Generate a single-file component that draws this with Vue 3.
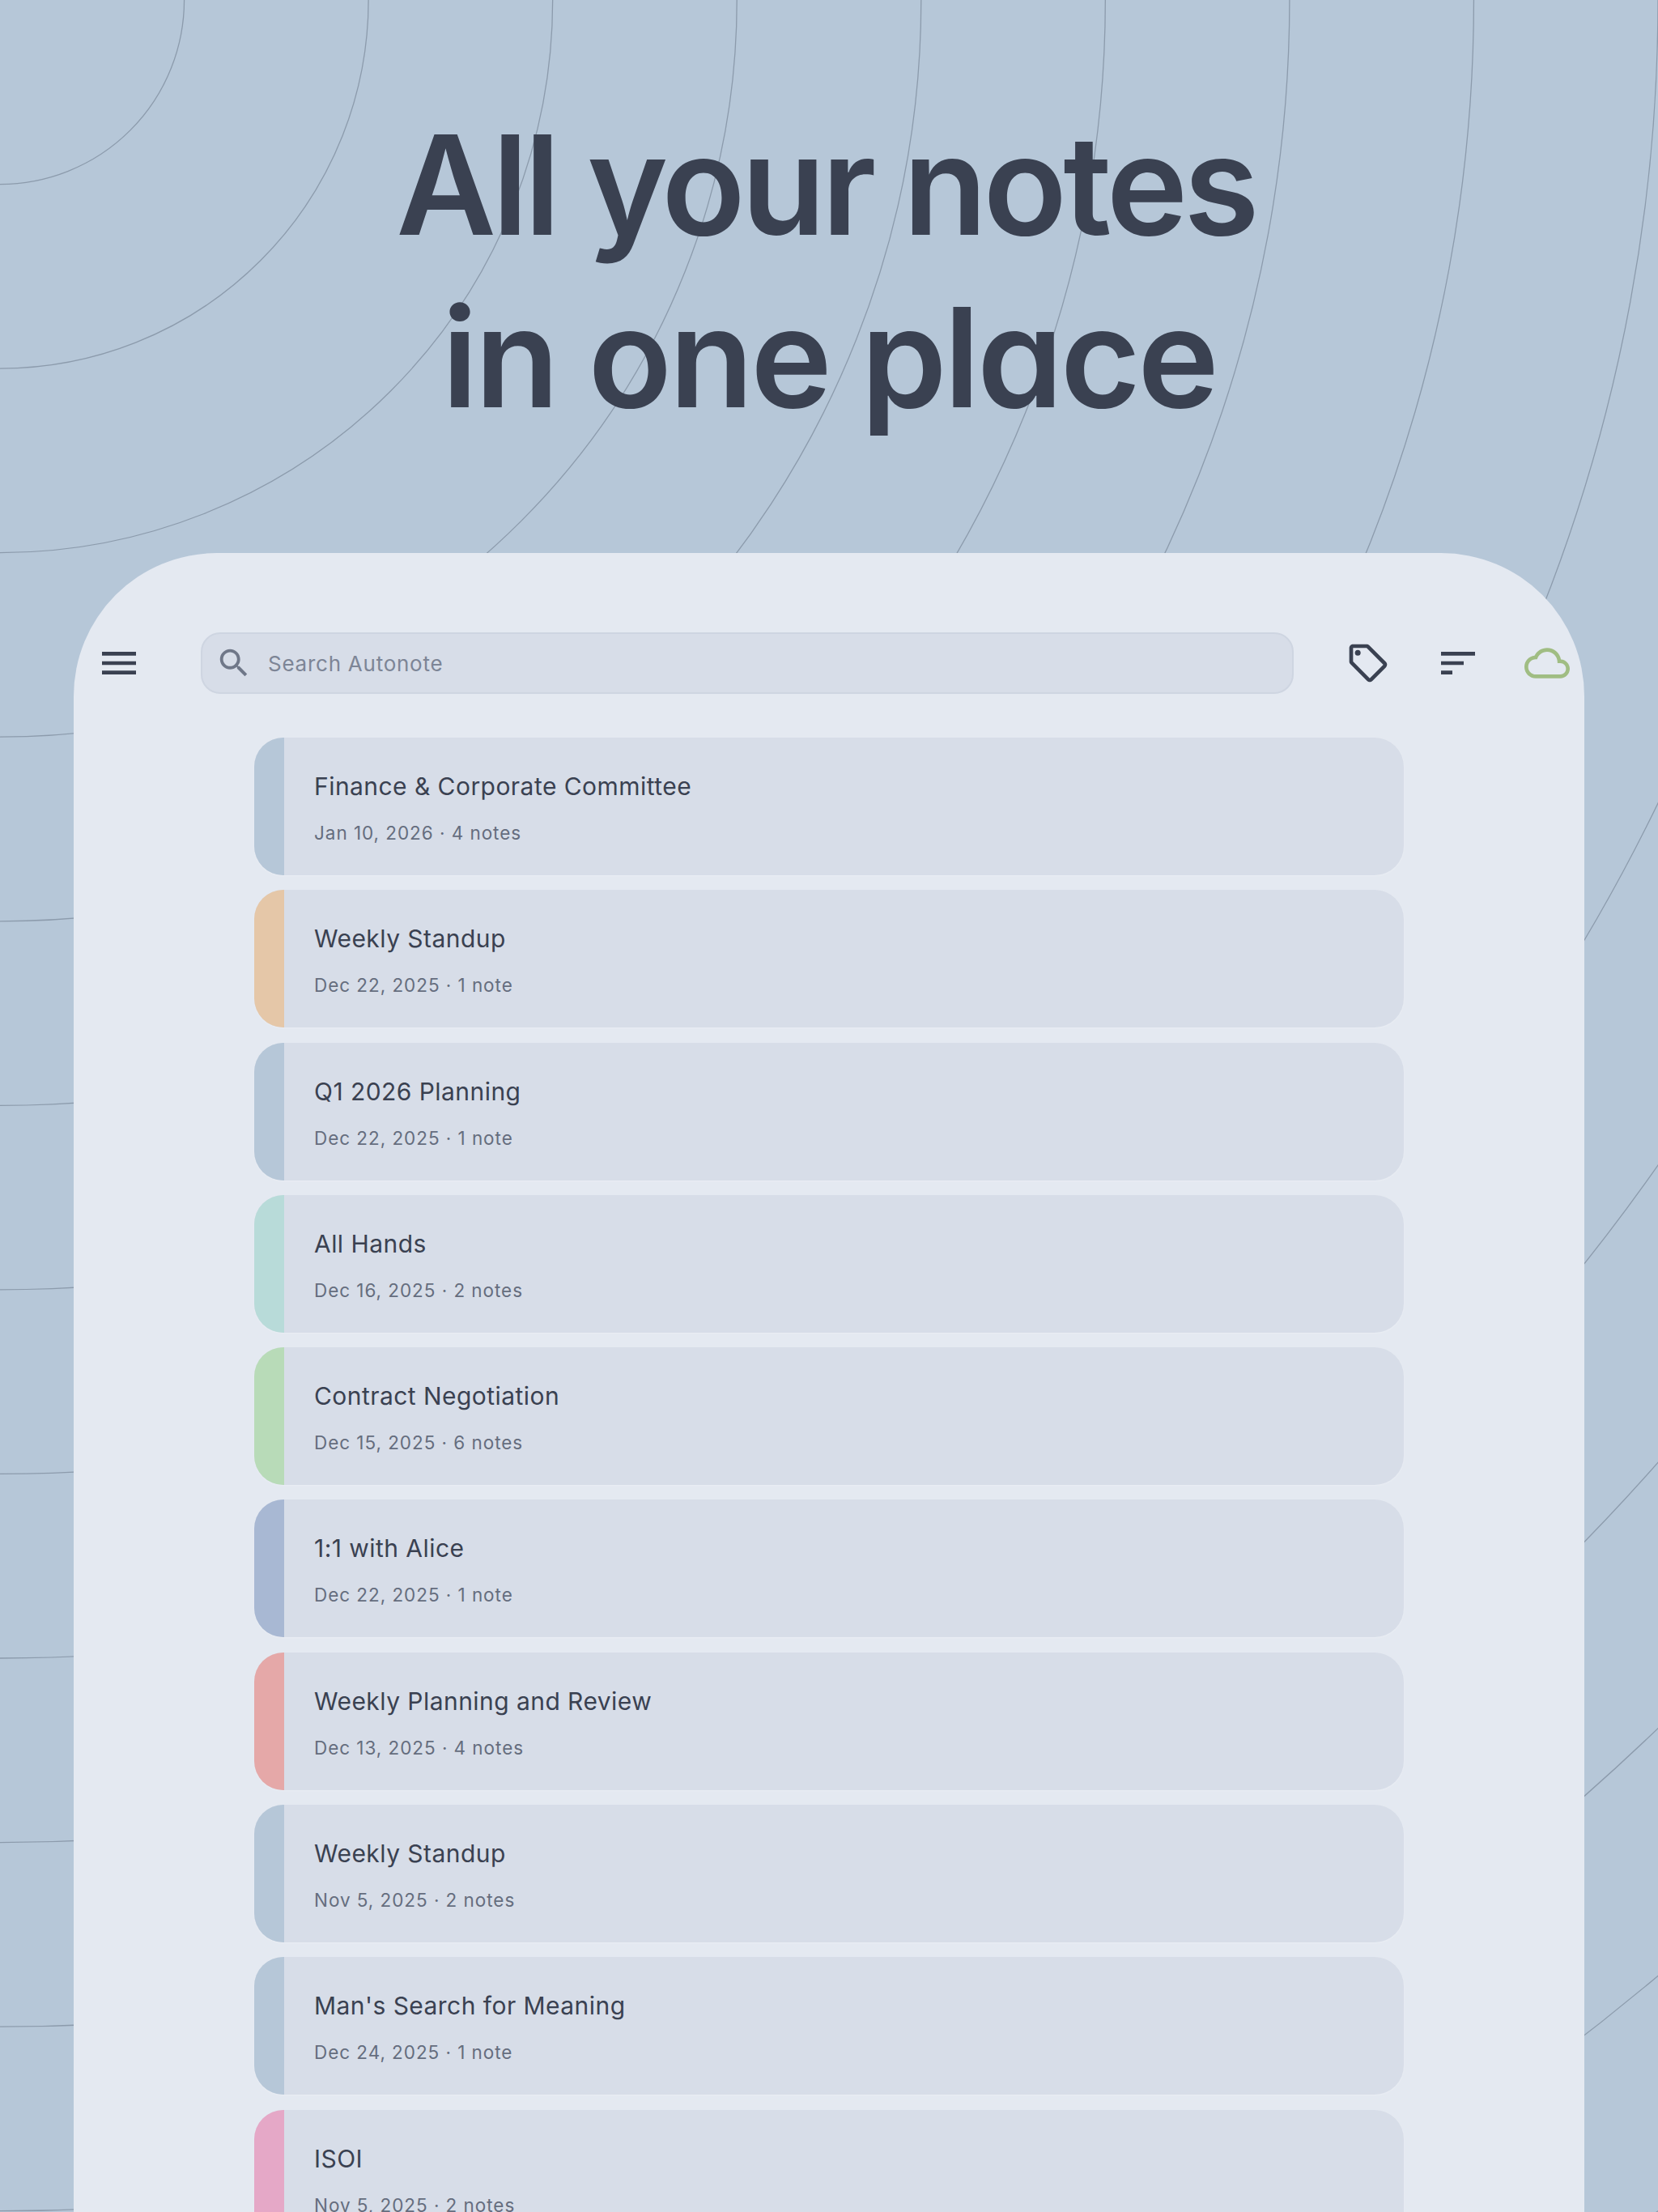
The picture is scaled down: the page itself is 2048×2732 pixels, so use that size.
<script setup>
const rings = Array.from({ length: 15 }, (_, i) => ((i + 1) * 2048) / 9)

const meetings = [
  { title: 'Finance & Corporate Committee', meta: 'Jan 10, 2026 · 4 notes', color: '#b6c7d8' },
  { title: 'Weekly Standup', meta: 'Dec 22, 2025 · 1 note', color: '#e5c7a8' },
  { title: 'Q1 2026 Planning', meta: 'Dec 22, 2025 · 1 note', color: '#b6c7d8' },
  { title: 'All Hands', meta: 'Dec 16, 2025 · 2 notes', color: '#b8dbd9' },
  { title: 'Contract Negotiation', meta: 'Dec 15, 2025 · 6 notes', color: '#b8dbb8' },
  { title: '1:1 with Alice', meta: 'Dec 22, 2025 · 1 note', color: '#a8b8d3' },
  { title: 'Weekly Planning and Review', meta: 'Dec 13, 2025 · 4 notes', color: '#e5a8a8' },
  { title: 'Weekly Standup', meta: 'Nov 5, 2025 · 2 notes', color: '#b6c7d8' },
  { title: "Man's Search for Meaning", meta: 'Dec 24, 2025 · 1 note', color: '#b6c7d8' },
  { title: 'ISOI', meta: 'Nov 5, 2025 · 2 notes', color: '#e5a8c7' }
]
</script>

<template>
  <div class="page">
    <!-- Background rings -->
    <svg class="rings" width="2048" height="2732" viewBox="0 0 2048 2732" fill="none">
      <circle v-for="r in rings" :key="r" cx="0" cy="0" :r="r" />
    </svg>

    <!-- Hero -->
    <h1 class="hero">
      <span class="line-one">All your notes</span>
      <span class="line-two">in one place</span>
    </h1>

    <!-- App card -->
    <div class="card">
      <div class="toolbar">
        <svg class="icon" viewBox="0 0 24 24"><path d="M3 18h18v-2H3v2zm0-5h18v-2H3v2zm0-7v2h18V6H3z" /></svg>
        <div class="search">
          <svg class="search-icon" viewBox="0 0 24 24"><path d="M15.5 14h-.79l-.28-.27C15.41 12.59 16 11.11 16 9.5 16 5.91 13.09 3 9.5 3S3 5.91 3 9.5 5.91 16 9.5 16c1.61 0 3.09-.59 4.23-1.57l.27.28v.79l5 4.99L20.49 19l-4.99-5zm-6 0C7.01 14 5 11.99 5 9.5S7.01 5 9.5 5 14 7.01 14 9.5 11.99 14 9.5 14z" /></svg>
          <span class="search-text">Search Autonote</span>
        </div>
        <div class="actions">
          <svg class="icon" viewBox="0 0 24 24">
            <path d="M21.41 11.41l-8.83-8.83C12.21 2.21 11.7 2 11.17 2H4c-1.1 0-2 .9-2 2v7.17c0 .53.21 1.04.59 1.41l8.83 8.83c.78.78 2.05.78 2.83 0l7.17-7.17c.78-.78.78-2.04-.01-2.83zM12.83 20L4 11.17V4h7.17L20 12.83 12.83 20z" />
            <circle cx="6.5" cy="6.5" r="1.5" />
          </svg>
          <svg class="icon" viewBox="0 0 24 24"><path d="M3 18h6v-2H3v2zM3 6v2h18V6H3zm0 7h12v-2H3v2z" /></svg>
          <svg class="icon cloud" viewBox="0 0 24 24"><path d="M19.35 10.04C18.67 6.59 15.64 4 12 4 9.11 4 6.6 5.64 5.35 8.04 2.34 8.36 0 10.91 0 14c0 3.31 2.69 6 6 6h13c2.76 0 5-2.24 5-5 0-2.64-2.05-4.78-4.65-4.96zM19 18H6c-2.21 0-4-1.79-4-4s1.79-4 4-4h.71C7.37 7.69 9.48 6 12 6c3.04 0 5.5 2.46 5.5 5.5v.5H19c1.66 0 3 1.34 3 3s-1.34 3-3 3z" /></svg>
        </div>
      </div>

      <!-- Meetings -->
      <div class="list">
        <div v-for="(m, i) in meetings" :key="i" class="item">
          <div class="stripe" :style="{ background: m.color }"></div>
          <div class="body">
            <div class="title">{{ m.title }}</div>
            <div class="meta">{{ m.meta }}</div>
          </div>
        </div>
      </div>
    </div>
  </div>
</template>

<style>
html,
body {
  margin: 0;
  background: #b6c7d8;
}
</style>

<style scoped>
.page {
  position: relative;
  width: 2048px;
  height: 2732px;
  overflow: hidden;
  background: #b6c7d8;
  font-family: Inter, "Liberation Sans", sans-serif;
  color: #3a4151;
}

.rings {
  position: absolute;
  top: 0;
  left: 0;
}

.rings circle {
  stroke: #8c9bac;
  stroke-width: 1.3;
}

.hero {
  position: relative;
  height: 683px;
  box-sizing: border-box;
  margin: 0;
  padding-top: 122px;
  font-size: 170px;
  line-height: 213px;
  font-weight: 600;
  text-align: center;
  font-feature-settings: "cv11";
}

.line-one {
  display: block;
  margin-right: 8px;
  letter-spacing: -4.9px;
}

.line-two {
  display: block;
  letter-spacing: -3.5px;
}

.card {
  position: relative;
  width: 1866px;
  height: 2049px;
  margin: 0 auto;
  box-sizing: border-box;
  padding-top: 98px;
  background: #e4e9f1;
  border-radius: 177px 177px 0 0;
}

/* Toolbar */
.toolbar {
  display: flex;
  align-items: center;
  padding-left: 27.5px;
}

.icon {
  display: block;
  flex: none;
  width: 56px;
  height: 56px;
  fill: #3a4151;
}

.cloud {
  fill: #a0bd83;
}

.search {
  display: flex;
  align-items: center;
  box-sizing: border-box;
  width: 1350px;
  height: 76px;
  margin-left: 73.5px;
  padding-left: 15.5px;
  background: #d7dde8;
  border: 2px solid #ced5e1;
  border-radius: 24px;
}

.search-icon {
  flex: none;
  width: 46px;
  height: 46px;
  fill: #6f7788;
}

.search-text {
  margin-left: 19.5px;
  font-size: 26px;
  letter-spacing: 0.75px;
  color: #7d8596;
}

.actions {
  display: flex;
  gap: 54.5px;
  margin-left: 64px;
}

/* List */
.list {
  display: flex;
  flex-direction: column;
  gap: 18.3px;
  width: 1420px;
  margin: 54px auto 0;
}

.item {
  display: flex;
  flex: none;
  height: 170px;
  background: #d7dde8;
  border-radius: 36px;
  box-shadow: 0 1px 3px rgba(255, 255, 255, 0.25);
  overflow: hidden;
}

.stripe {
  flex: none;
  width: 37px;
}

.body {
  display: flex;
  flex-direction: column;
  padding: 42px 0 0 37px;
}

.title {
  font-size: 30px;
  line-height: 36px;
  letter-spacing: 0.45px;
  color: #3a4151;
}

.meta {
  margin-top: 26px;
  font-size: 22.5px;
  line-height: 28px;
  letter-spacing: 0.95px;
  color: #656d7e;
}
</style>
